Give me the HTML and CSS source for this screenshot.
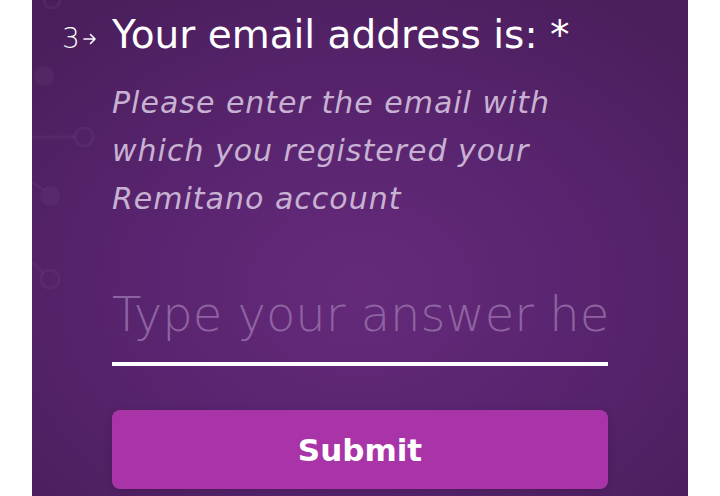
FILE: index.html
```html
<!DOCTYPE html>
<html>
<head>
<meta charset="utf-8">
<link rel="stylesheet" href="styles.css">
</head>
<body>
<div class="panel">
  <svg class="circuit" width="120" height="320" viewBox="0 0 120 320">
    <g fill="none" stroke="#ffffff" stroke-opacity="0.04" stroke-width="3">
      <circle cx="20" cy="0" r="8"/>
      <line x1="0" y1="137" x2="43" y2="137"/>
      <circle cx="52" cy="137" r="9"/>
      <line x1="0" y1="182" x2="12" y2="190"/>
      <circle cx="18" cy="279" r="9"/>
      <line x1="0" y1="262" x2="11" y2="273"/>
    </g>
    <g fill="#ffffff" fill-opacity="0.04">
      <circle cx="12" cy="76" r="10"/>
      <circle cx="18" cy="196" r="10"/>
    </g>
  </svg>
  <div class="content">
    <div class="question">
      <div class="num">3<svg class="arrow" width="14" height="12" viewBox="0 0 14 12"><path d="M1 6H12M7.5 1.5L12 6L7.5 10.5" fill="none" stroke="#ffffff" stroke-width="1.6" stroke-linecap="round" stroke-linejoin="round"/></svg></div>
      <h1 class="title">Your email address is: *</h1>
    </div>
    <p class="desc">Please enter the email with which you registered your Remitano account</p>
    <div class="field">
      <input class="answer" type="text" placeholder="Type your answer here...">
    </div>
    <button class="submit">Submit</button>
  </div>
</div>
</body>
</html>
```
FILE: styles.css
```css
html, body {
  margin: 0;
  padding: 0;
  background: #ffffff;
}
body {
  width: 720px;
  height: 496px;
  overflow: hidden;
  font-family: "DejaVu Sans", sans-serif;
}
.panel {
  position: relative;
  margin: 0 32px;
  height: 496px;
  background: radial-gradient(ellipse 70% 70% at 50% 58%, #652a7b 0%, #5a2570 45%, #4a1e5c 100%);
  overflow: hidden;
}
.circuit {
  position: absolute;
  left: 0;
  top: 0;
}
.content {
  position: relative;
  padding: 0 80px;
  display: flex;
  flex-direction: column;
}
.question {
  display: flex;
  align-items: baseline;
  margin-top: 9px;
}
.num {
  width: 50px;
  margin-left: -50px;
  font-size: 28px;
  color: #ffffff;
  font-weight: 300;
}
.arrow {
  margin-left: 3px;
  vertical-align: 3px;
}
.title {
  margin: 0;
  font-size: 39px;
  font-weight: normal;
  color: #ffffff;
  line-height: 52px;
}
.desc {
  margin: 18px 0 0;
  font-size: 30px;
  letter-spacing: 1px;
  font-style: italic;
  font-weight: 300;
  line-height: 48px;
  color: #c8b2d3;
}
.field {
  margin-top: 63px;
}
.answer {
  width: 100%;
  box-sizing: border-box;
  background: transparent;
  border: none;
  border-bottom: 4px solid #ffffff;
  padding: 0 0 20px;
  font-family: "DejaVu Sans", sans-serif;
  font-size: 48px;
  font-weight: 300;
  color: #ffffff;
  outline: none;
}
.answer::placeholder {
  color: #8e63a1;
}
.submit {
  margin-top: 44px;
  height: 79px;
  border: none;
  border-radius: 8px;
  background: #a934a8;
  color: #ffffff;
  font-family: "DejaVu Sans", sans-serif;
  font-weight: bold;
  font-size: 31px;
  padding-top: 2px;
  box-shadow: 0 2px 8px rgba(0, 0, 0, 0.15);
}
```
